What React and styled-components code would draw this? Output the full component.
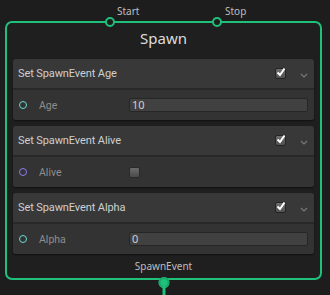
import React from "react";
import styled, { createGlobalStyle } from "styled-components";

const GlobalStyle = createGlobalStyle`
  html, body {
    margin: 0;
    padding: 0;
    background: #1d1d1d;
    font-family: "Noto Sans", "Open Sans", sans-serif;
  }
`;

const GREEN = "#1fc07a";

const Canvas = styled.div`
  width: 330px;
  height: 295px;
  position: relative;
  overflow: hidden;
  padding: 21px 8px 0 5px;
  box-sizing: border-box;
`;

const Node = styled.div`
  position: relative;
  width: 317px;
  height: 259px;
  box-sizing: border-box;
  border: 2px solid ${GREEN};
  border-radius: 7px;
  background: #1f1f1f;
  display: flex;
  flex-direction: column;
  padding: 0 6px;
`;

const Port = styled.div`
  position: absolute;
  width: 10px;
  height: 10px;
  box-sizing: border-box;
  border-radius: 50%;
  border: 2px solid ${GREEN};
  background: #1d1d1d;
  transform: translate(-50%, -50%);
  left: ${(p) => p.x}px;
  top: ${(p) => p.y}px;
`;

const PortLabel = styled.span`
  position: absolute;
  font-size: 10px;
  color: #bdbdbd;
  left: ${(p) => p.x}px;
  top: ${(p) => p.y}px;
`;

const Title = styled.div`
  height: 34px;
  padding-bottom: 5px;
  box-sizing: border-box;
  margin-bottom: 2px;
  display: flex;
  align-items: center;
  justify-content: center;
  font-size: 15px;
  color: #dcdcdc;
`;

const Sections = styled.div`
  display: flex;
  flex-direction: column;
  gap: 6px;
`;

const Section = styled.div`
  height: 61px;
  border-radius: 3px;
  overflow: hidden;
  background: #282828;
  display: flex;
  flex-direction: column;
  gap: 2px;
  box-shadow: 0 1px 2px rgba(0, 0, 0, 0.5);
`;

const Header = styled.div`
  height: 29px;
  background: #383838;
  display: flex;
  align-items: center;
  padding: 0 5px;
  font-family: "Roboto", "Noto Sans", sans-serif;
  font-size: 11px;
  letter-spacing: -0.1px;
  color: #cfcfcf;
`;

const HeaderText = styled.span`
  flex: 1;
`;

const CheckBox = styled.div`
  width: 11px;
  height: 11px;
  box-sizing: border-box;
  border-radius: 2px;
  border: 1px solid #252525;
  background: linear-gradient(#6e6e6e, #505050);
  position: relative;
`;

const Chevron = styled.svg`
  margin-left: 14px;
  margin-right: 1px;
  margin-top: 4px;
`;

const Row = styled.div`
  flex: 1;
  background: #333333;
  display: flex;
  align-items: center;
  padding: 0 6px 0 6px;
  font-family: "Roboto", "Noto Sans", sans-serif;
  font-size: 10.5px;
  color: #8e8e8e;
`;

const RowPort = styled.span`
  width: 8px;
  height: 8px;
  box-sizing: border-box;
  border-radius: 50%;
  border: 1.5px solid ${(p) => p.color};
  margin-right: 12px;
`;

const RowLabel = styled.span`
  width: 90px;
`;

const Field = styled.div`
  flex: 1;
  height: 14px;
  box-sizing: border-box;
  background: #414141;
  border: 1px solid #262626;
  border-radius: 2px;
  font-family: "Noto Sans", sans-serif;
  font-size: 11px;
  line-height: 12px;
  color: #d0d0d0;
  padding-left: 2px;
`;

const ToggleBox = styled.div`
  width: 11px;
  height: 11px;
  box-sizing: border-box;
  border-radius: 2px;
  border: 1px solid #2a2a2a;
  background: linear-gradient(#6c6c6c, #4a4a4a);
`;

const Footer = styled.div`
  flex: 1;
  display: flex;
  align-items: center;
  justify-content: center;
  font-size: 10px;
  color: #bdbdbd;
  padding-bottom: 1px;
`;

const BottomPort = styled.div`
  position: absolute;
  left: 50%;
  top: calc(100% - 1px);
  transform: translateX(-50%);
  display: flex;
  flex-direction: column;
  align-items: center;
`;

const BottomDot = styled.div`
  width: 11px;
  height: 11px;
  border-radius: 50%;
  background: ${GREEN};
  box-shadow: inset 0 0 0 2px #17a868;
`;

const BottomWire = styled.div`
  width: 3px;
  height: 20px;
  background: ${GREEN};
  margin-top: -2px;
`;

function Check() {
  return (
    <svg width="10" height="10" viewBox="0 0 10 10" style={{ position: "absolute", left: 0, top: -2 }}>
      <path
        d="M1.5 5.5 L4 8 L8.5 1.5"
        fill="none"
        stroke="#ffffff"
        strokeWidth="2"
      />
    </svg>
  );
}

const sections = [
  { title: "Set SpawnEvent Age", label: "Age", color: "#6ed8d2", kind: "field", value: "10" },
  { title: "Set SpawnEvent Alive", label: "Alive", color: "#8b7cf0", kind: "toggle" },
  { title: "Set SpawnEvent Alpha", label: "Alpha", color: "#6ed8d2", kind: "field", value: "0" },
];

export default function App() {
  return (
    <>
      <GlobalStyle />
      <Canvas>
        <PortLabel x={117} y={4}>Start</PortLabel>
        <PortLabel x={225} y={4}>Stop</PortLabel>
        <Node>
          <Port x={103} y={-1} />
          <Port x={210} y={-1} />
          <Title>Spawn</Title>
          <Sections>
            {sections.map((s) => (
              <Section key={s.title}>
                <Header>
                  <HeaderText>{s.title}</HeaderText>
                  <CheckBox>
                    <Check />
                  </CheckBox>
                  <Chevron width="8" height="5" viewBox="0 0 8 5">
                    <path d="M1 1 L4 4 L7 1" fill="none" stroke="#7a7a7a" strokeWidth="1.1" />
                  </Chevron>
                </Header>
                <Row>
                  <RowPort color={s.color} />
                  <RowLabel>{s.label}</RowLabel>
                  {s.kind === "field" ? <Field>{s.value}</Field> : <ToggleBox />}
                </Row>
              </Section>
            ))}
          </Sections>
          <Footer>SpawnEvent</Footer>
          <BottomPort>
            <BottomDot />
            <BottomWire />
          </BottomPort>
        </Node>
      </Canvas>
    </>
  );
}
